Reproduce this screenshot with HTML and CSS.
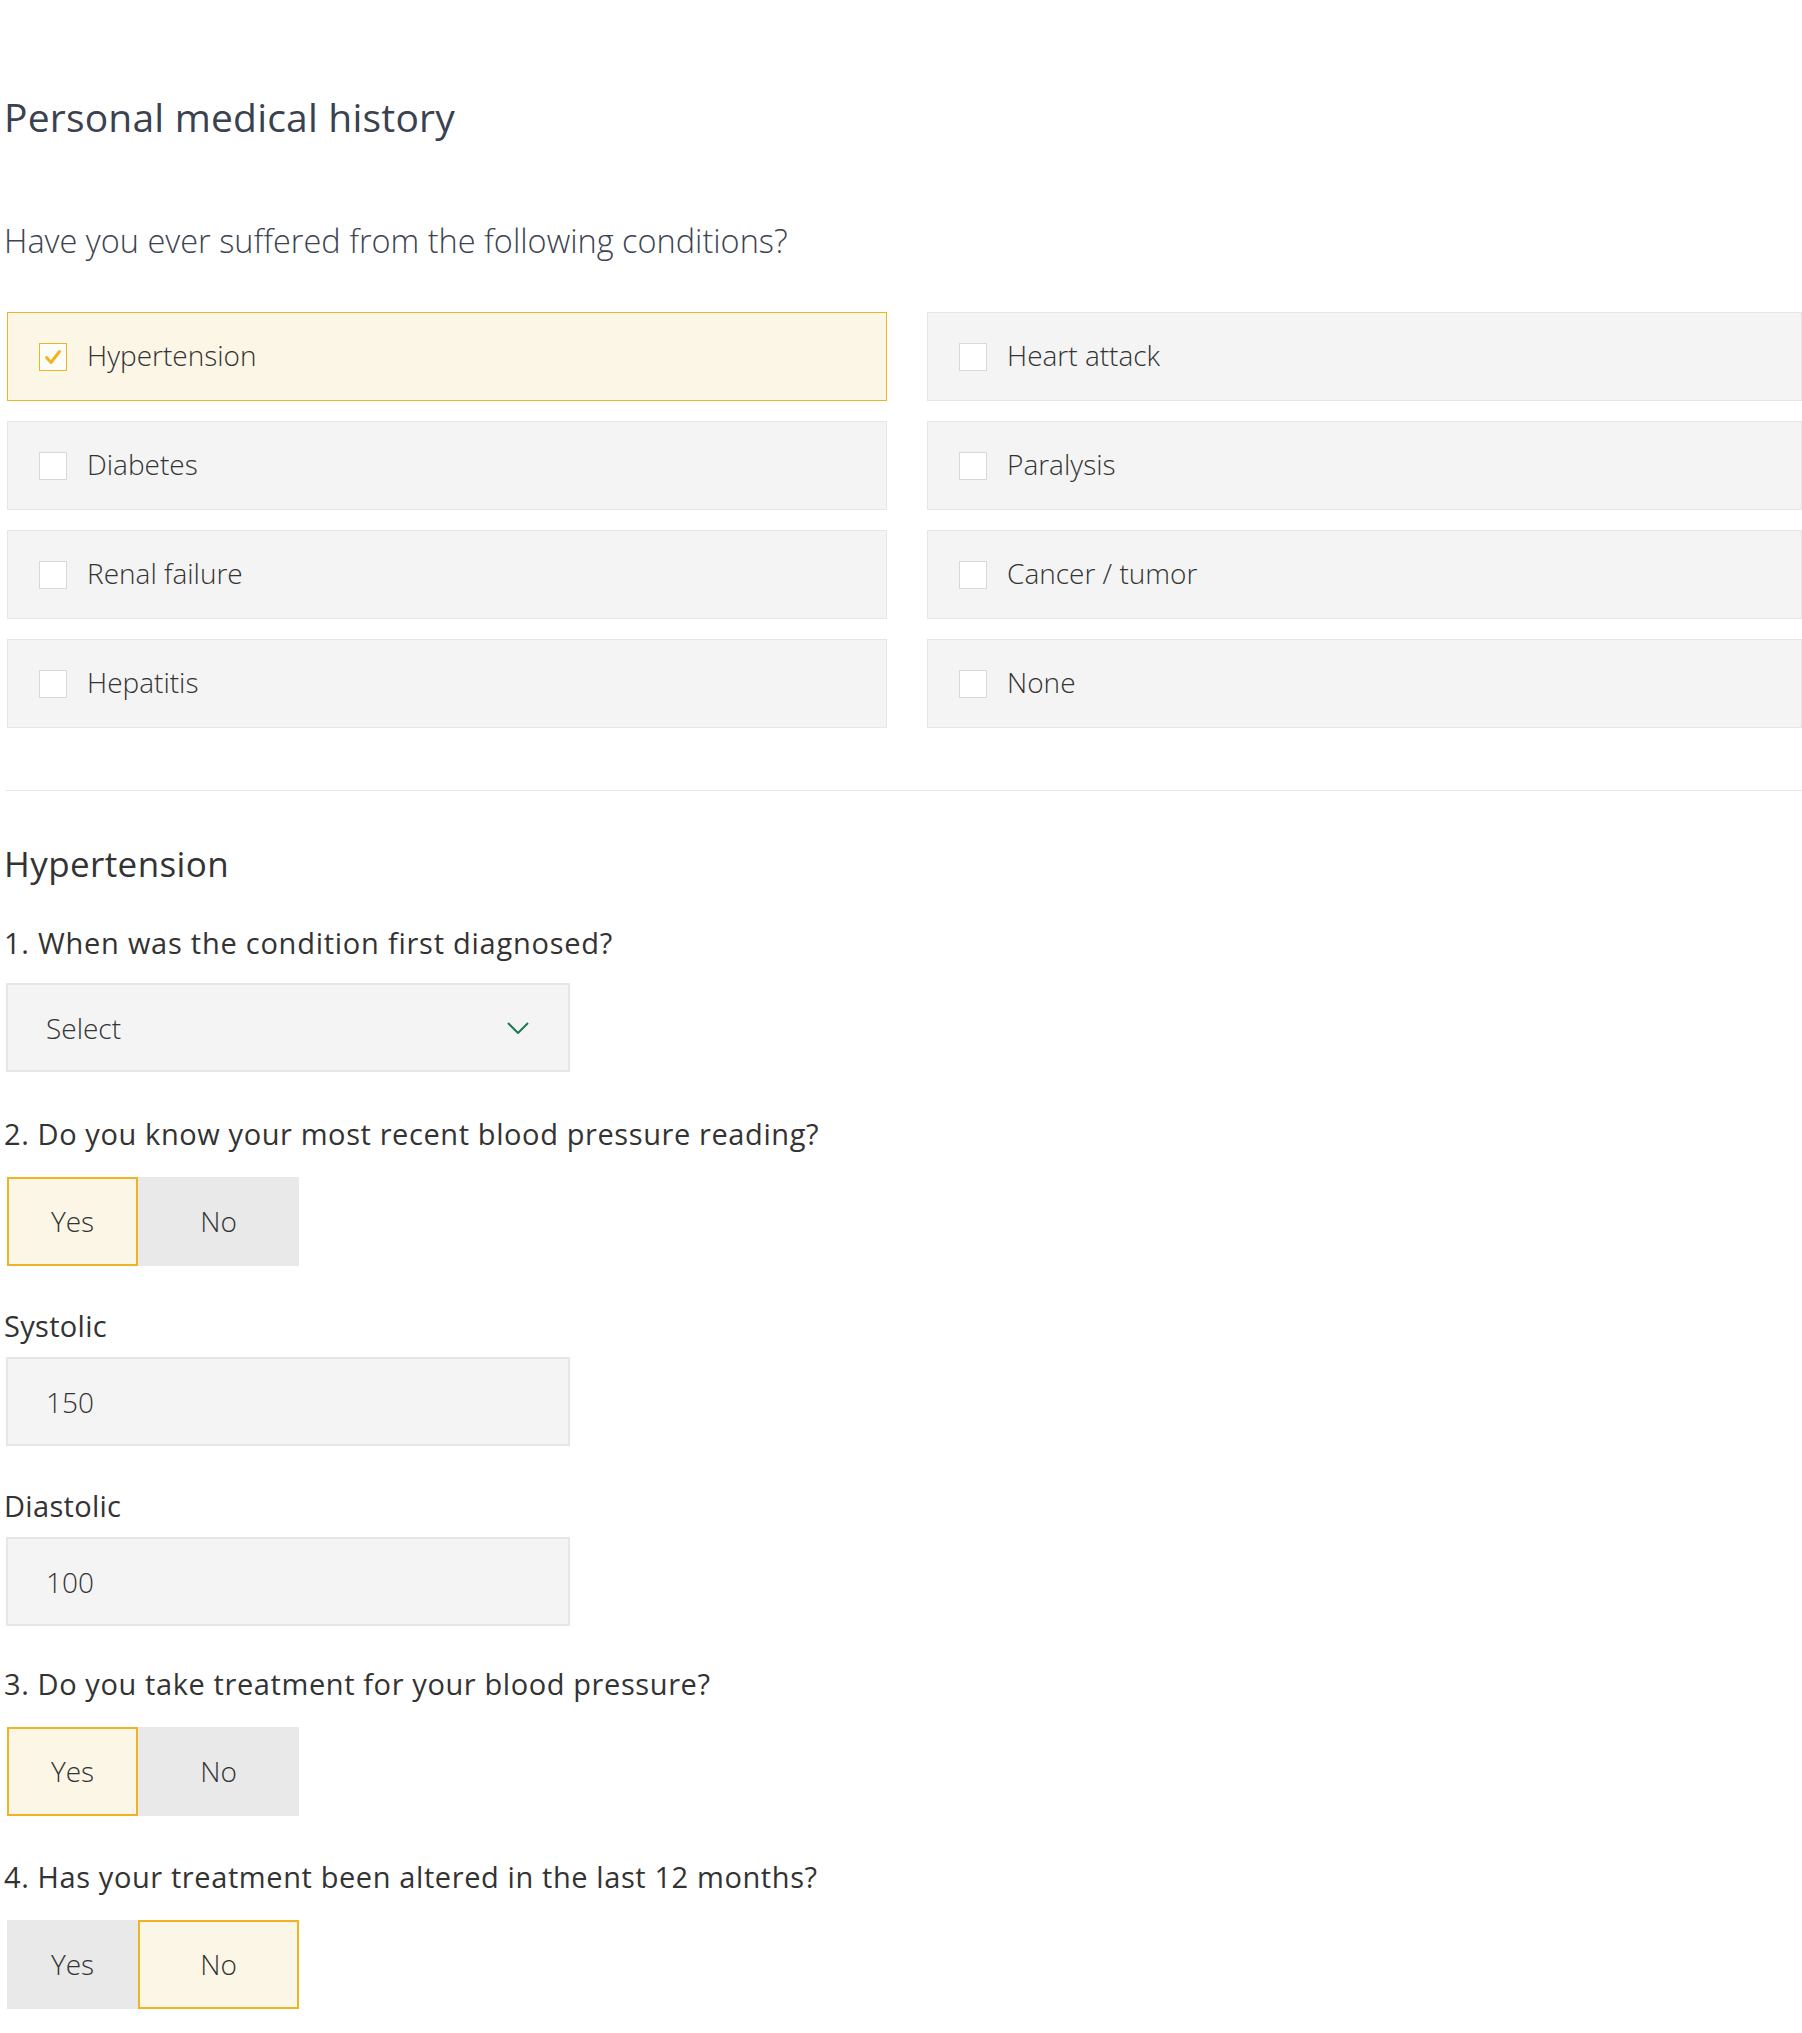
FILE: index.html
```html
<!DOCTYPE html>
<html lang="en">
<head>
<meta charset="utf-8">
<title>Personal medical history</title>
<link rel="stylesheet" href="styles.css">
</head>
<body>
<main class="page">
  <h1 class="title">Personal medical history</h1>
  <p class="intro">Have you ever suffered from the following conditions?</p>

  <div class="conditions">
    <label class="cond cond--checked"><span class="box"><svg viewBox="0 0 28 28" width="28" height="28"><path d="M7.5 14.5 L12 19.5 L20.5 8.5" fill="none" stroke="#f0b323" stroke-width="3" stroke-linecap="round" stroke-linejoin="round"/></svg></span><span class="cond-text">Hypertension</span></label>
    <label class="cond"><span class="box"></span><span class="cond-text">Heart attack</span></label>
    <label class="cond"><span class="box"></span><span class="cond-text">Diabetes</span></label>
    <label class="cond"><span class="box"></span><span class="cond-text">Paralysis</span></label>
    <label class="cond"><span class="box"></span><span class="cond-text">Renal failure</span></label>
    <label class="cond"><span class="box"></span><span class="cond-text">Cancer / tumor</span></label>
    <label class="cond"><span class="box"></span><span class="cond-text">Hepatitis</span></label>
    <label class="cond"><span class="box"></span><span class="cond-text">None</span></label>
  </div>

  <hr class="divider">

  <h2 class="section">Hypertension</h2>

  <p class="question q1">1. When was the condition first diagnosed?</p>
  <div class="select">
    <span class="select-text">Select</span>
    <svg class="chevron" viewBox="0 0 22 12" width="22" height="12"><path d="M1 1 L11 11 L21 1" fill="none" stroke="#1b7a4b" stroke-width="2"/></svg>
  </div>

  <p class="question q2">2. Do you know your most recent blood pressure reading?</p>
  <div class="toggle">
    <span class="opt opt-yes opt--on">Yes</span><span class="opt opt-no">No</span>
  </div>

  <p class="field-label fl1">Systolic</p>
  <div class="input">150</div>

  <p class="field-label fl2">Diastolic</p>
  <div class="input">100</div>

  <p class="question q3">3. Do you take treatment for your blood pressure?</p>
  <div class="toggle">
    <span class="opt opt-yes opt--on">Yes</span><span class="opt opt-no">No</span>
  </div>

  <p class="question q4">4. Has your treatment been altered in the last 12 months?</p>
  <div class="toggle">
    <span class="opt opt-yes">Yes</span><span class="opt opt-no opt--on">No</span>
  </div>
</main>
</body>
</html>
```

FILE: styles.css
```css
html, body {
  margin: 0;
  padding: 0;
  background: #ffffff;
}

body {
  font-family: "Open Sans", "Noto Sans", "Liberation Sans", sans-serif;
  color: #333333;
  overflow-x: hidden;
}

.page {
  padding: 94px 0 40px 4px;
}

.title {
  margin: 0;
  font-size: 39px;
  line-height: 46px;
  font-weight: 400;
  letter-spacing: 0.2px;
  color: #3a4250;
}

.intro {
  margin: 81px 0 0;
  font-size: 32.5px;
  line-height: 40px;
  font-weight: 300;
  color: #3d4451;
}

.conditions {
  margin: 51px 0 0 3px;
  display: grid;
  grid-template-columns: 880px 1fr;
  column-gap: 40px;
  row-gap: 20px;
}

.cond {
  height: 89px;
  box-sizing: border-box;
  display: flex;
  align-items: center;
  padding-left: 31px;
  background: #f4f4f4;
  border: 1px solid #e6e6e6;
}

.cond--checked {
  background: #fcf6e6;
  border-color: #f0b323;
}

.box {
  width: 28px;
  height: 28px;
  box-sizing: border-box;
  background: #ffffff;
  border: 1px solid #d8d8d8;
  display: flex;
  flex: none;
}

.box svg {
  display: block;
  margin: -1px;
}

.cond--checked .box {
  border-color: #f0b323;
  background: #fffdf8;
}

.cond-text {
  margin-left: 20px;
  margin-bottom: 3px;
  font-size: 28px;
  font-weight: 300;
  color: #333333;
}

.divider {
  margin: 62px 0 0 2px;
  border: 0;
  border-top: 1px solid #e6e6e6;
  height: 0;
}

.section {
  margin: 53px 0 0;
  font-size: 35px;
  line-height: 40px;
  font-weight: 400;
  letter-spacing: 0.4px;
  color: #333333;
}

.question,
.field-label {
  margin: 0;
  font-size: 29px;
  line-height: 36px;
  font-weight: 400;
  letter-spacing: 0.6px;
  color: #333333;
}

.q1 { letter-spacing: 0.75px; }

.field-label {
  letter-spacing: 0.3px;
}

.q1 { margin-top: 41px; }
.q2 { margin-top: 44px; }
.q3 { margin-top: 40px; }
.q4 { margin-top: 43px; }
.fl1 { margin-top: 42px; }
.fl2 { margin-top: 42px; }

.select,
.input {
  width: 564px;
  height: 89px;
  box-sizing: border-box;
  margin: 22px 0 0 2px;
  background: #f4f4f4;
  border: 2px solid #e6e6e6;
  display: flex;
  align-items: center;
  padding: 0 38px;
  font-size: 28px;
  font-weight: 300;
  color: #333333;
}

.input {
  margin-top: 13px;
}

.select {
  justify-content: space-between;
}

.select-text {
  flex: 1;
}

.chevron {
  display: block;
  margin-right: 1px;
}

.toggle {
  display: flex;
  margin: 25px 0 0 3px;
}

.opt {
  height: 89px;
  box-sizing: border-box;
  display: flex;
  align-items: center;
  justify-content: center;
  padding-bottom: 2px;
  background: #e9e9e9;
  font-size: 28px;
  font-weight: 300;
  color: #333333;
}

.opt-yes { width: 131px; }
.opt-no { width: 161px; }

.opt--on {
  background: #fcf6e6;
  border: 2px solid #f0b323;
}
```
